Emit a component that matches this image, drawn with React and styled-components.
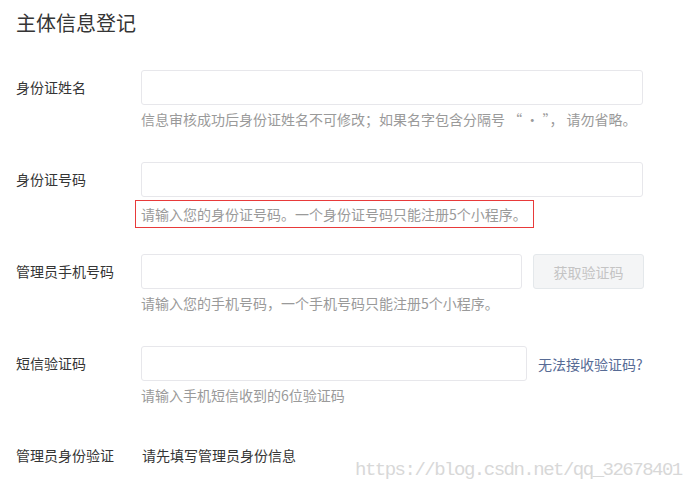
import React from 'react';
import styled, { createGlobalStyle } from 'styled-components';

const GlobalStyle = createGlobalStyle`
  body {
    margin: 0;
    background: #fff;
    font-family: "Noto Sans CJK SC", "Noto Sans", sans-serif;
    color: #353535;
  }
`;

const Page = styled.div`
  position: relative;
  width: 696px;
  height: 490px;
  padding: 9px 0 0 16px;
  box-sizing: border-box;
  overflow: hidden;
`;

const Title = styled.h2`
  margin: 0 0 33px;
  font-size: 20px;
  font-weight: 400;
  line-height: 28px;
  color: #353535;
`;

const Row = styled.div`
  display: flex;
  margin-bottom: 32px;
`;

const Label = styled.div`
  width: 125px;
  flex: none;
  height: 35px;
  line-height: 35px;
  font-size: 14px;
  color: #353535;
`;

const Field = styled.div`
  display: flex;
  flex-direction: column;
`;

const Controls = styled.div`
  display: flex;
  align-items: center;
  gap: 11px;
`;

const Input = styled.input`
  width: ${p => p.$w}px;
  height: 35px;
  box-sizing: border-box;
  border: 1px solid #e7e7eb;
  border-radius: 3px;
  padding: 0 10px;
  font-size: 14px;
  outline: none;
`;

const CodeButton = styled.button`
  width: 111px;
  height: 35px;
  box-sizing: border-box;
  border: 1px solid #e4e8eb;
  border-radius: 3px;
  background: #f4f5f6;
  color: #c4c4c4;
  font-family: inherit;
  font-size: 14px;
`;

const Link = styled.a`
  font-size: 14px;
  color: #576b95;
  text-decoration: none;
  cursor: pointer;
`;

const Tip = styled.div`
  margin-top: 3px;
  font-size: 14px;
  line-height: 22px;
  color: #9a9a9a;
  ${p => p.$marked && `
    width: 399px;
    box-sizing: border-box;
    margin: 3px 0 -6px -6px;
    padding: 2px 5px;
    border: 1px solid #e83a3a;
  `}
`;

const Plain = styled.div`
  height: 35px;
  line-height: 35px;
  font-size: 14px;
  color: #353535;
  padding-left: 1px;
`;

const Watermark = styled.div`
  position: absolute;
  left: 355px;
  top: 459px;
  font-family: "Liberation Mono", monospace;
  font-size: 19px;
  letter-spacing: -1.5px;
  color: #d8d8d8;
`;

export default function App() {
  return (
    <Page>
      <GlobalStyle />
      <Title>主体信息登记</Title>

      <Row>
        <Label>身份证姓名</Label>
        <Field>
          <Input $w={502} />
          <Tip>信息审核成功后身份证姓名不可修改；如果名字包含分隔号 “ · ”， 请勿省略。</Tip>
        </Field>
      </Row>

      <Row>
        <Label>身份证号码</Label>
        <Field>
          <Input $w={502} />
          <Tip $marked>请输入您的身份证号码。一个身份证号码只能注册5个小程序。</Tip>
        </Field>
      </Row>

      <Row>
        <Label>管理员手机号码</Label>
        <Field>
          <Controls>
            <Input $w={381} />
            <CodeButton disabled>获取验证码</CodeButton>
          </Controls>
          <Tip>请输入您的手机号码，一个手机号码只能注册5个小程序。</Tip>
        </Field>
      </Row>

      <Row>
        <Label>短信验证码</Label>
        <Field>
          <Controls>
            <Input $w={386} />
            <Link>无法接收验证码?</Link>
          </Controls>
          <Tip>请输入手机短信收到的6位验证码</Tip>
        </Field>
      </Row>

      <Row>
        <Label>管理员身份验证</Label>
        <Plain>请先填写管理员身份信息</Plain>
      </Row>

      <Watermark>https://blog.csdn.net/qq_32678401</Watermark>
    </Page>
  );
}
